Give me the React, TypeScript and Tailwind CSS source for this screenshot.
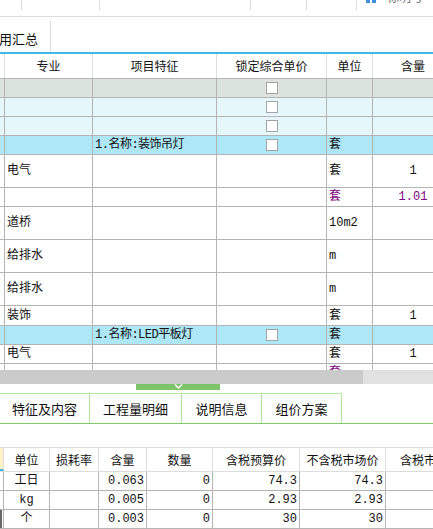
import React from 'react';

type Row = {
  h: string;
  bg: string;
  zy?: string;
  tz?: string;
  check?: boolean;
  dw?: string;
  hl?: string;
  purple?: boolean;
};

const rows: Row[] = [
  { h: 'h-[19px]', bg: 'bg-[#dbe3df]', check: true },
  { h: 'h-[19px]', bg: 'bg-[#e6f7fb]', check: true },
  { h: 'h-[19px]', bg: 'bg-[#e6f7fb]', check: true },
  { h: 'h-[19px]', bg: 'bg-[#ade7f8]', tz: '1.名称:装饰吊灯', check: true, dw: '套' },
  { h: 'h-[33px]', bg: 'bg-white', zy: '电气', dw: '套', hl: '1' },
  { h: 'h-[19px]', bg: 'bg-white', dw: '套', hl: '1.01', purple: true },
  { h: 'h-[33px]', bg: 'bg-white', zy: '道桥', dw: '10m2' },
  { h: 'h-[33px]', bg: 'bg-white', zy: '给排水', dw: 'm' },
  { h: 'h-[33px]', bg: 'bg-white', zy: '给排水', dw: 'm' },
  { h: 'h-[20px]', bg: 'bg-white', zy: '装饰', dw: '套', hl: '1' },
  { h: 'h-[19px]', bg: 'bg-[#ade7f8]', tz: '1.名称:LED平板灯', check: true, dw: '套' },
  { h: 'h-[19px]', bg: 'bg-white', zy: '电气', dw: '套', hl: '1' },
  { h: 'h-[19px]', bg: 'bg-white', dw: '套', purple: true },
];

const bottomRows = [
  { dw: '工日', hl: '0.063', sl: '0', ys: '74.3', sc: '74.3' },
  { dw: 'kg', hl: '0.005', sl: '0', ys: '2.93', sc: '2.93' },
  { dw: '个', hl: '0.003', sl: '0', ys: '30', sc: '30' },
];

function CheckBox() {
  return <div className="w-[12px] h-[12px] border border-[#a3a3a3] bg-white" />;
}

export default function App() {
  const mono = "font-['Liberation_Mono','Noto_Sans_CJK_SC',monospace]";
  return (
    <div className="w-[433px] h-[529px] overflow-hidden bg-white text-[#111] font-['Noto_Sans_CJK_SC',sans-serif]">
      {/* 上部の切れたツールバー */}
      <div className="h-[17px] border-b border-[#dcdcdc] flex items-start">
        <div className="w-[22px] h-[10px] border-r border-[#dcdcdc] shrink-0" />
        <div className="w-[78px] h-[10px] border-r border-[#dcdcdc] shrink-0" />
        <div className="w-[151px] h-[10px] border-r border-[#dcdcdc] shrink-0" />
        <div className="w-[56px] h-[10px] border-r border-[#dcdcdc] shrink-0" />
        <div className="w-[50px] h-[10px] border-r border-[#dcdcdc] shrink-0" />
        <div className="flex items-start gap-[2px] ml-[9px]">
          <div className="w-[4px] h-[3px] bg-[#3d8fdc]" />
          <div className="w-[4px] h-[3px] bg-[#3d8fdc]" />
          <div className="ml-[9px] -mt-[10px] text-[12px] leading-[13px] text-[#666]">标明号</div>
        </div>
      </div>

      {/* タブ */}
      <div className="h-[35px] flex items-end">
        <div className="w-[52px] h-[31px] border-r border-[#dcdcdc] text-[13px] leading-none pt-[11px] -ml-[1px] shrink-0">
          用汇总
        </div>
      </div>
      <div className="h-[2px] bg-[#44b8e4]" />

      {/* 表ヘッダー */}
      <div className="h-[25px] flex border-b border-[#b4b4b4] text-[12px]">
        <div className="w-[5px] shrink-0 border-r border-[#dcdcdc]" />
        <div className="w-[88px] shrink-0 border-r border-[#dcdcdc] flex items-center justify-center">专业</div>
        <div className="w-[124px] shrink-0 border-r border-[#dcdcdc] flex items-center justify-center">项目特征</div>
        <div className="w-[110px] shrink-0 border-r border-[#dcdcdc] flex items-center justify-center">锁定综合单价</div>
        <div className="w-[46px] shrink-0 border-r border-[#dcdcdc] flex items-center justify-center">单位</div>
        <div className="w-[70px] shrink-0 flex items-center justify-center pl-[10px]">含量</div>
      </div>

      {/* 表本体 */}
      <div className={`h-[291px] overflow-hidden text-[12px] ${mono}`}>
        {rows.map((r, i) => (
          <div key={i} className={`flex ${r.h} ${r.bg} border-b border-[#b4b4b4]`}>
            <div className="w-[5px] shrink-0 border-r border-[#b4b4b4]" />
            <div className="w-[88px] shrink-0 border-r border-[#b4b4b4] flex items-center pl-[2px]">
              {r.zy}
            </div>
            <div className="w-[124px] shrink-0 border-r border-[#b4b4b4] flex items-center pl-[2px] tracking-[-0.5px]">
              {r.tz}
            </div>
            <div className="w-[110px] shrink-0 border-r border-[#b4b4b4] flex items-center justify-center">
              {r.check && <CheckBox />}
            </div>
            <div
              className={`w-[46px] shrink-0 border-r border-[#b4b4b4] flex items-center pl-[2px] ${r.purple ? 'text-[#800080]' : ''}`}
            >
              {r.dw}
            </div>
            <div
              className={`w-[70px] shrink-0 flex items-center justify-center pl-[10px] ${r.purple ? 'text-[#800080]' : ''}`}
            >
              {r.hl}
            </div>
          </div>
        ))}
      </div>

      {/* スクロールバー */}
      <div className="h-[14px] flex">
        <div className="w-[363px] bg-[#cbcbcb]" />
        <div className="flex-1 bg-[#e1e1e1]" />
      </div>
      <div className="h-[6px] flex">
        <div className="ml-[136px] w-[84px] bg-[#7fc46a] flex justify-center">
          <svg width="9" height="5" viewBox="0 0 9 5">
            <path d="M1 0.5 L4.5 4 L8 0.5" fill="none" stroke="#fff" strokeWidth="1.4" />
          </svg>
        </div>
      </div>

      {/* 下部タブ */}
      <div className="h-[3px]" />
      <div className="h-[31px] flex border-b border-[#84c86c] text-[13px]">
        <div className="w-[90px] border-t border-r border-[#b5e3a0] flex items-center justify-center">特征及内容</div>
        <div className="w-[92px] border-t border-r border-[#b5e3a0] flex items-center justify-center">工程量明细</div>
        <div className="w-[80px] border-t border-r border-[#b5e3a0] flex items-center justify-center">说明信息</div>
        <div className="w-[80px] border-t border-r border-[#b5e3a0] flex items-center justify-center">组价方案</div>
      </div>

      <div className="h-[23px]" />

      {/* 下部の表 */}
      <div className="h-[25px] flex border-t border-b border-[#dcdcdc] text-[12px]">
        <div className="w-[4px] shrink-0 bg-[#fff1c6] border-r border-[#dcdcdc] border-b-2 border-b-[#44b8e4]" />
        <div className="w-[46px] shrink-0 border-r border-[#dcdcdc] flex items-center justify-center">单位</div>
        <div className="w-[49px] shrink-0 border-r border-[#dcdcdc] flex items-center justify-center">损耗率</div>
        <div className="w-[48px] shrink-0 border-r border-[#dcdcdc] flex items-center justify-center">含量</div>
        <div className="w-[66px] shrink-0 border-r border-[#dcdcdc] flex items-center justify-center">数量</div>
        <div className="w-[87px] shrink-0 border-r border-[#dcdcdc] flex items-center justify-center">含税预算价</div>
        <div className="w-[86px] shrink-0 border-r border-[#dcdcdc] flex items-center justify-center">不含税市场价</div>
        <div className="w-[80px] shrink-0 flex items-center pl-[14px] whitespace-nowrap">含税市场价</div>
      </div>
      {bottomRows.map((r, i) => (
        <div key={i} className={`h-[19px] flex border-b border-[#b4b4b4] text-[12px] ${mono}`}>
          <div
            className={`w-[4px] shrink-0 border-r border-[#b4b4b4] ${i === 2 ? 'border-l-2 border-l-[#666]' : ''}`}
          />
          <div className="w-[46px] shrink-0 border-r border-[#b4b4b4] flex items-center justify-center">{r.dw}</div>
          <div className="w-[49px] shrink-0 border-r border-[#b4b4b4]" />
          <div className="w-[48px] shrink-0 border-r border-[#b4b4b4] flex items-center justify-end pr-[2px]">{r.hl}</div>
          <div className="w-[66px] shrink-0 border-r border-[#b4b4b4] flex items-center justify-end pr-[2px]">{r.sl}</div>
          <div className="w-[87px] shrink-0 border-r border-[#b4b4b4] flex items-center justify-end pr-[2px]">{r.ys}</div>
          <div className="w-[86px] shrink-0 border-r border-[#b4b4b4] flex items-center justify-end pr-[2px]">{r.sc}</div>
          <div className="w-[80px] shrink-0" />
        </div>
      ))}
    </div>
  );
}
